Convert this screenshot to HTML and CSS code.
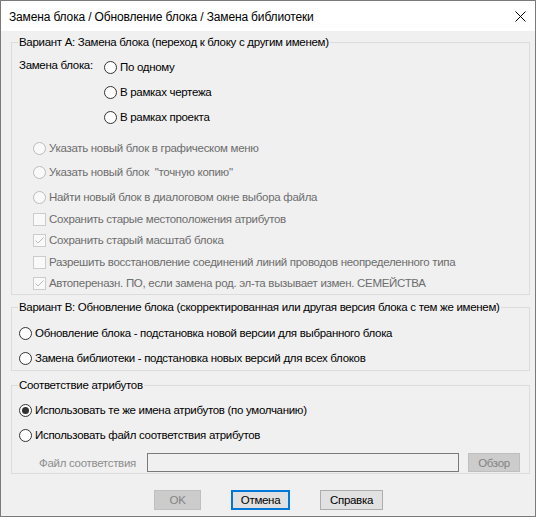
FILE: index.html
```html
<!DOCTYPE html>
<html lang="ru">
<head>
<meta charset="utf-8">
<title>Замена блока</title>
<link rel="stylesheet" href="styles.css">
</head>
<body>
<div class="window">
  <div class="titlebar">
    <span class="title">Замена блока / Обновление блока / Замена библиотеки</span>
    <svg class="close" width="11" height="11" viewBox="0 0 11 11"><path d="M0.5 0.5L10.5 10.5M10.5 0.5L0.5 10.5" stroke="#000" stroke-width="1" fill="none"/></svg>
  </div>
  <div class="client">
    <fieldset class="group group-a">
      <legend>Вариант А: Замена блока (переход к блоку с другим именем)</legend>
      <div class="mode">
        <span class="mode-label">Замена блока:</span>
        <div class="mode-options">
          <div class="opt"><span class="radio"></span>По одному</div>
          <div class="opt m9"><span class="radio"></span>В рамках чертежа</div>
          <div class="opt m9"><span class="radio"></span>В рамках проекта</div>
        </div>
      </div>
      <div class="opt sub disabled m15"><span class="radio"></span>Указать новый блок в графическом меню</div>
      <div class="opt sub disabled m8"><span class="radio"></span>Указать новый блок&nbsp; "точную копию"</div>
      <div class="opt sub disabled m9"><span class="radio"></span>Найти новый блок в диалоговом окне выбора файла</div>
      <div class="opt sub disabled m6"><span class="check"></span>Сохранить старые местоположения атрибутов</div>
      <div class="opt sub disabled m5"><span class="check"><svg width="13" height="13" viewBox="0 0 13 13"><path d="M2.5 6.5L5 9L10.5 3.5" stroke="#bcbcbc" stroke-width="1" fill="none"/></svg></span>Сохранить старый масштаб блока</div>
      <div class="opt sub disabled m6"><span class="check"></span>Разрешить восстановление соединений линий проводов неопределенного типа</div>
      <div class="opt sub disabled m5"><span class="check"><svg width="13" height="13" viewBox="0 0 13 13"><path d="M2.5 6.5L5 9L10.5 3.5" stroke="#bcbcbc" stroke-width="1" fill="none"/></svg></span>Автопереназн. ПО, если замена род. эл-та вызывает измен. СЕМЕЙСТВА</div>
    </fieldset>

    <fieldset class="group group-b">
      <legend>Вариант В: Обновление блока (скорректированная или другая версия блока с тем же именем)</legend>
      <div class="opt"><span class="radio"></span>Обновление блока - подстановка новой версии для выбранного блока</div>
      <div class="opt m9"><span class="radio"></span>Замена библиотеки - подстановка новых версий для всех блоков</div>
    </fieldset>

    <fieldset class="group group-c">
      <legend>Соответствие атрибутов</legend>
      <div class="opt"><span class="radio on"></span>Использовать те же имена атрибутов (по умолчанию)</div>
      <div class="opt m9"><span class="radio"></span>Использовать файл соответствия атрибутов</div>
      <div class="file-row">
        <span class="file-label">Файл соответствия</span>
        <span class="file-input"></span>
        <span class="btn btn-disabled btn-browse">Обзор</span>
      </div>
    </fieldset>

    <div class="buttons">
      <span class="btn btn-disabled btn-ok">OK</span>
      <span class="btn btn-default btn-cancel">Отмена</span>
      <span class="btn btn-help">Справка</span>
    </div>
  </div>
</div>
</body>
</html>
```

FILE: styles.css
```css
html, body {
  margin: 0;
  padding: 0;
  background: #ffffff;
}

body {
  font-family: "Liberation Sans", Arial, sans-serif;
  font-size: 11.5px;
  letter-spacing: -0.3px;
  color: #000;
}

.window {
  width: 536px;
  height: 517px;
  box-sizing: border-box;
  border: 1px solid #7a7a7a;
  background: #f0f0f0;
  display: flex;
  flex-direction: column;
}

.titlebar {
  height: 30px;
  background: #ffffff;
  display: flex;
  align-items: center;
  justify-content: space-between;
  padding: 0 9px 0 8px;
  flex: none;
}

.title {
  font-size: 12px;
  letter-spacing: -0.15px;
  line-height: 16px;
  margin-top: 1px;
}

.close {
  display: block;
}

.client {
  flex: 1;
  display: flex;
  flex-direction: column;
  padding: 0 5px 0 10px;
}

.group {
  margin: 0;
  border: 1px solid #dcdcdc;
  padding: 9px 7px 3px 7px;
  min-width: 0;
}

.group legend {
  padding: 0 1px;
  margin-left: -1px;
  line-height: 16px;
  height: 16px;
  white-space: nowrap;
}

.group-a { margin-top: 3px; }
.group-b { margin-top: 4px; padding-top: 10px; padding-bottom: 4px; }
.group-c { margin-top: 6px; padding-top: 9px; padding-bottom: 1px; }

.mode {
  display: flex;
}

.mode-label {
  width: 85px;
  line-height: 16px;
  margin-top: -2px;
}

.mode-options {
  display: flex;
  flex-direction: column;
}

.opt {
  display: flex;
  align-items: center;
  height: 16px;
  line-height: 16px;
  white-space: nowrap;
}

.sub { margin-left: 14px; }

.m5 { margin-top: 5px; }
.m6 { margin-top: 6px; }
.m8 { margin-top: 8px; }
.m9 { margin-top: 9px; }
.m15 { margin-top: 15px; }

.radio {
  width: 13px;
  height: 13px;
  box-sizing: border-box;
  border: 1px solid #333333;
  border-radius: 50%;
  background: #ffffff;
  margin-right: 3px;
  flex: none;
  display: flex;
  align-items: center;
  justify-content: center;
}

.radio.on::after {
  content: "";
  width: 7px;
  height: 7px;
  border-radius: 50%;
  background: #333333;
}

.check {
  width: 13px;
  height: 13px;
  box-sizing: border-box;
  border: 1px solid #cccccc;
  background: #ffffff;
  margin-right: 3px;
  flex: none;
}

.check svg {
  display: block;
  margin: -1px;
}

.disabled { color: #6d6d6d; }

.disabled .radio {
  border-color: #bcbcbc;
  background: #f9f9f9;
}

.disabled .check {
  border-color: #cccccc;
  background: #f9f9f9;
}

.file-row {
  display: flex;
  align-items: center;
  height: 19px;
  margin-top: 10px;
}

.file-label {
  color: #8d8d8d;
  margin-left: 20px;
  width: 108px;
  flex: none;
}

.file-input {
  width: 312px;
  height: 19px;
  box-sizing: border-box;
  border: 1px solid #7a7a7a;
  background: #f0f0f0;
  flex: none;
}

.btn {
  display: flex;
  align-items: center;
  justify-content: center;
  box-sizing: border-box;
  height: 20px;
  border: 1px solid #adadad;
  background: #e1e1e1;
  flex: none;
}

.btn-disabled {
  background: #cccccc;
  border-color: #bfbfbf;
  color: #838383;
}

.btn-browse {
  width: 52px;
  height: 19px;
  margin-left: 9px;
}

.buttons {
  display: flex;
  justify-content: center;
  gap: 30px;
  margin-top: 16px;
  padding-right: 4px;
}

.btn-ok { width: 47px; }
.btn-cancel { width: 59px; border: 2px solid #0078d7; }
.btn-help { width: 63px; }
```
